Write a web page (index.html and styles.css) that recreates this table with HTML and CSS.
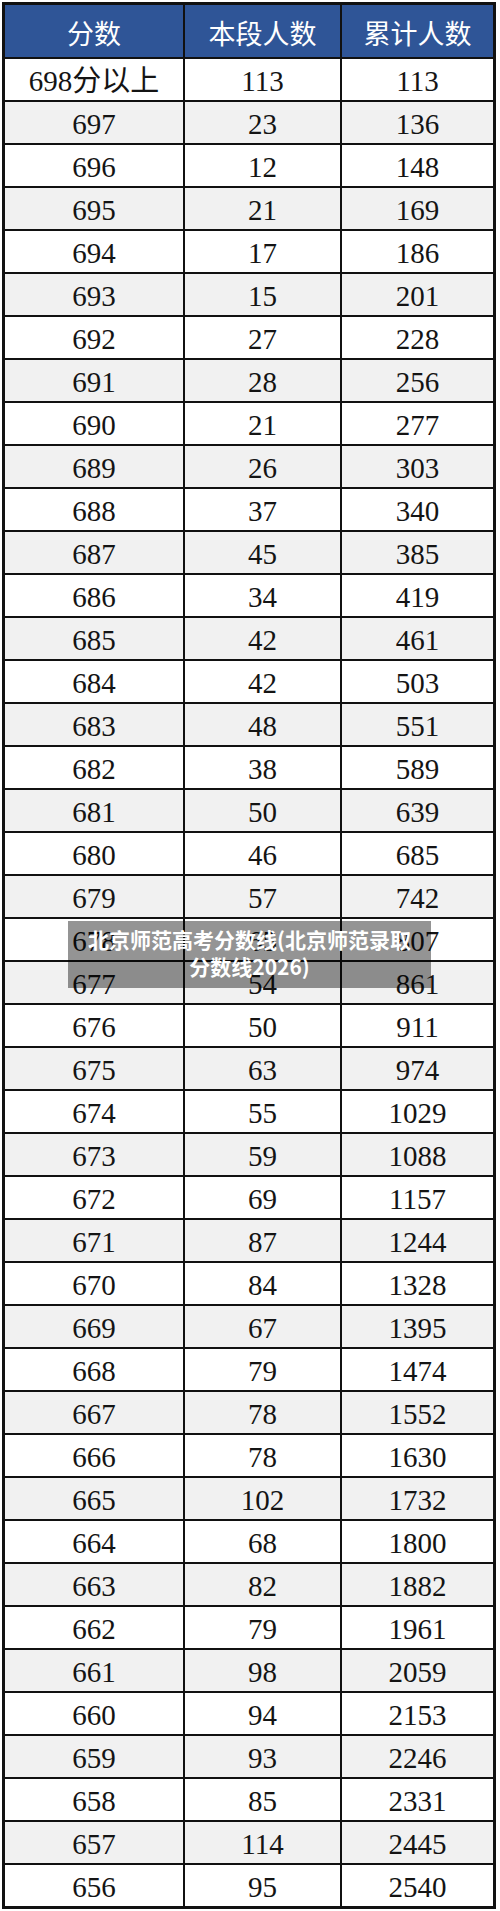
FILE: index.html
```html
<!DOCTYPE html>
<html lang="zh-CN">
<head>
<meta charset="utf-8">
<title>北京师范高考分数线</title>
<link rel="stylesheet" href="styles.css">
</head>
<body>
<div class="sheet">
<table class="scores">
<colgroup><col class="c1"><col class="c2"><col class="c3"></colgroup>
<thead>
<tr><th>分数</th><th>本段人数</th><th>累计人数</th></tr>
</thead>
<tbody>
<tr><td>698分以上</td><td>113</td><td>113</td></tr>
<tr><td>697</td><td>23</td><td>136</td></tr>
<tr><td>696</td><td>12</td><td>148</td></tr>
<tr><td>695</td><td>21</td><td>169</td></tr>
<tr><td>694</td><td>17</td><td>186</td></tr>
<tr><td>693</td><td>15</td><td>201</td></tr>
<tr><td>692</td><td>27</td><td>228</td></tr>
<tr><td>691</td><td>28</td><td>256</td></tr>
<tr><td>690</td><td>21</td><td>277</td></tr>
<tr><td>689</td><td>26</td><td>303</td></tr>
<tr><td>688</td><td>37</td><td>340</td></tr>
<tr><td>687</td><td>45</td><td>385</td></tr>
<tr><td>686</td><td>34</td><td>419</td></tr>
<tr><td>685</td><td>42</td><td>461</td></tr>
<tr><td>684</td><td>42</td><td>503</td></tr>
<tr><td>683</td><td>48</td><td>551</td></tr>
<tr><td>682</td><td>38</td><td>589</td></tr>
<tr><td>681</td><td>50</td><td>639</td></tr>
<tr><td>680</td><td>46</td><td>685</td></tr>
<tr><td>679</td><td>57</td><td>742</td></tr>
<tr><td>678</td><td>65</td><td>807</td></tr>
<tr><td>677</td><td>54</td><td>861</td></tr>
<tr><td>676</td><td>50</td><td>911</td></tr>
<tr><td>675</td><td>63</td><td>974</td></tr>
<tr><td>674</td><td>55</td><td>1029</td></tr>
<tr><td>673</td><td>59</td><td>1088</td></tr>
<tr><td>672</td><td>69</td><td>1157</td></tr>
<tr><td>671</td><td>87</td><td>1244</td></tr>
<tr><td>670</td><td>84</td><td>1328</td></tr>
<tr><td>669</td><td>67</td><td>1395</td></tr>
<tr><td>668</td><td>79</td><td>1474</td></tr>
<tr><td>667</td><td>78</td><td>1552</td></tr>
<tr><td>666</td><td>78</td><td>1630</td></tr>
<tr><td>665</td><td>102</td><td>1732</td></tr>
<tr><td>664</td><td>68</td><td>1800</td></tr>
<tr><td>663</td><td>82</td><td>1882</td></tr>
<tr><td>662</td><td>79</td><td>1961</td></tr>
<tr><td>661</td><td>98</td><td>2059</td></tr>
<tr><td>660</td><td>94</td><td>2153</td></tr>
<tr><td>659</td><td>93</td><td>2246</td></tr>
<tr><td>658</td><td>85</td><td>2331</td></tr>
<tr><td>657</td><td>114</td><td>2445</td></tr>
<tr><td>656</td><td>95</td><td>2540</td></tr>
</tbody>
</table>
<div class="caption">北京师范高考分数线(北京师范录取分数线2026)</div>
</div>
</body>
</html>
```
FILE: styles.css
```css
html, body {
  margin: 0;
  padding: 0;
  background: #ffffff;
}
.sheet {
  position: relative;
  width: 500px;
  padding: 2px 0 0 2px;
  box-sizing: border-box;
}
.scores {
  table-layout: fixed;
  border-collapse: separate;
  border-spacing: 0;
  border: 3px solid #111111;
  width: 494px;
  font-family: "Liberation Serif", "Noto Sans CJK SC", serif;
  color: #141414;
}
.c1 { width: 180px; }
.c2 { width: 157px; }
.c3 { width: 151px; }
.scores th,
.scores td {
  padding: 0;
  text-align: center;
  border-right: 2px solid #111111;
  border-bottom: 2px solid #111111;
  white-space: nowrap;
}
.scores th:last-child,
.scores td:last-child {
  border-right: none;
}
.scores tbody tr:last-child td {
  border-bottom: none;
}
.scores th {
  background: #2f5597;
  color: #ffffff;
  font-family: "Noto Sans CJK SC", sans-serif;
  font-weight: 400;
  font-size: 27px;
  line-height: 48px;
  padding-top: 4px;
}
.scores td {
  font-size: 29px;
  line-height: 38px;
  padding-top: 3px;
}
.scores tbody tr:nth-child(even) td {
  background: #f1f1f1;
}
.caption {
  position: absolute;
  left: 68px;
  top: 921px;
  width: 363px;
  height: 67px;
  box-sizing: border-box;
  padding: 5px 16px 0;
  background: rgba(0, 0, 0, 0.42);
  color: #ffffff;
  font-family: "Noto Sans CJK SC", sans-serif;
  font-weight: 700;
  font-size: 21px;
  line-height: 27px;
  text-align: center;
}
```
